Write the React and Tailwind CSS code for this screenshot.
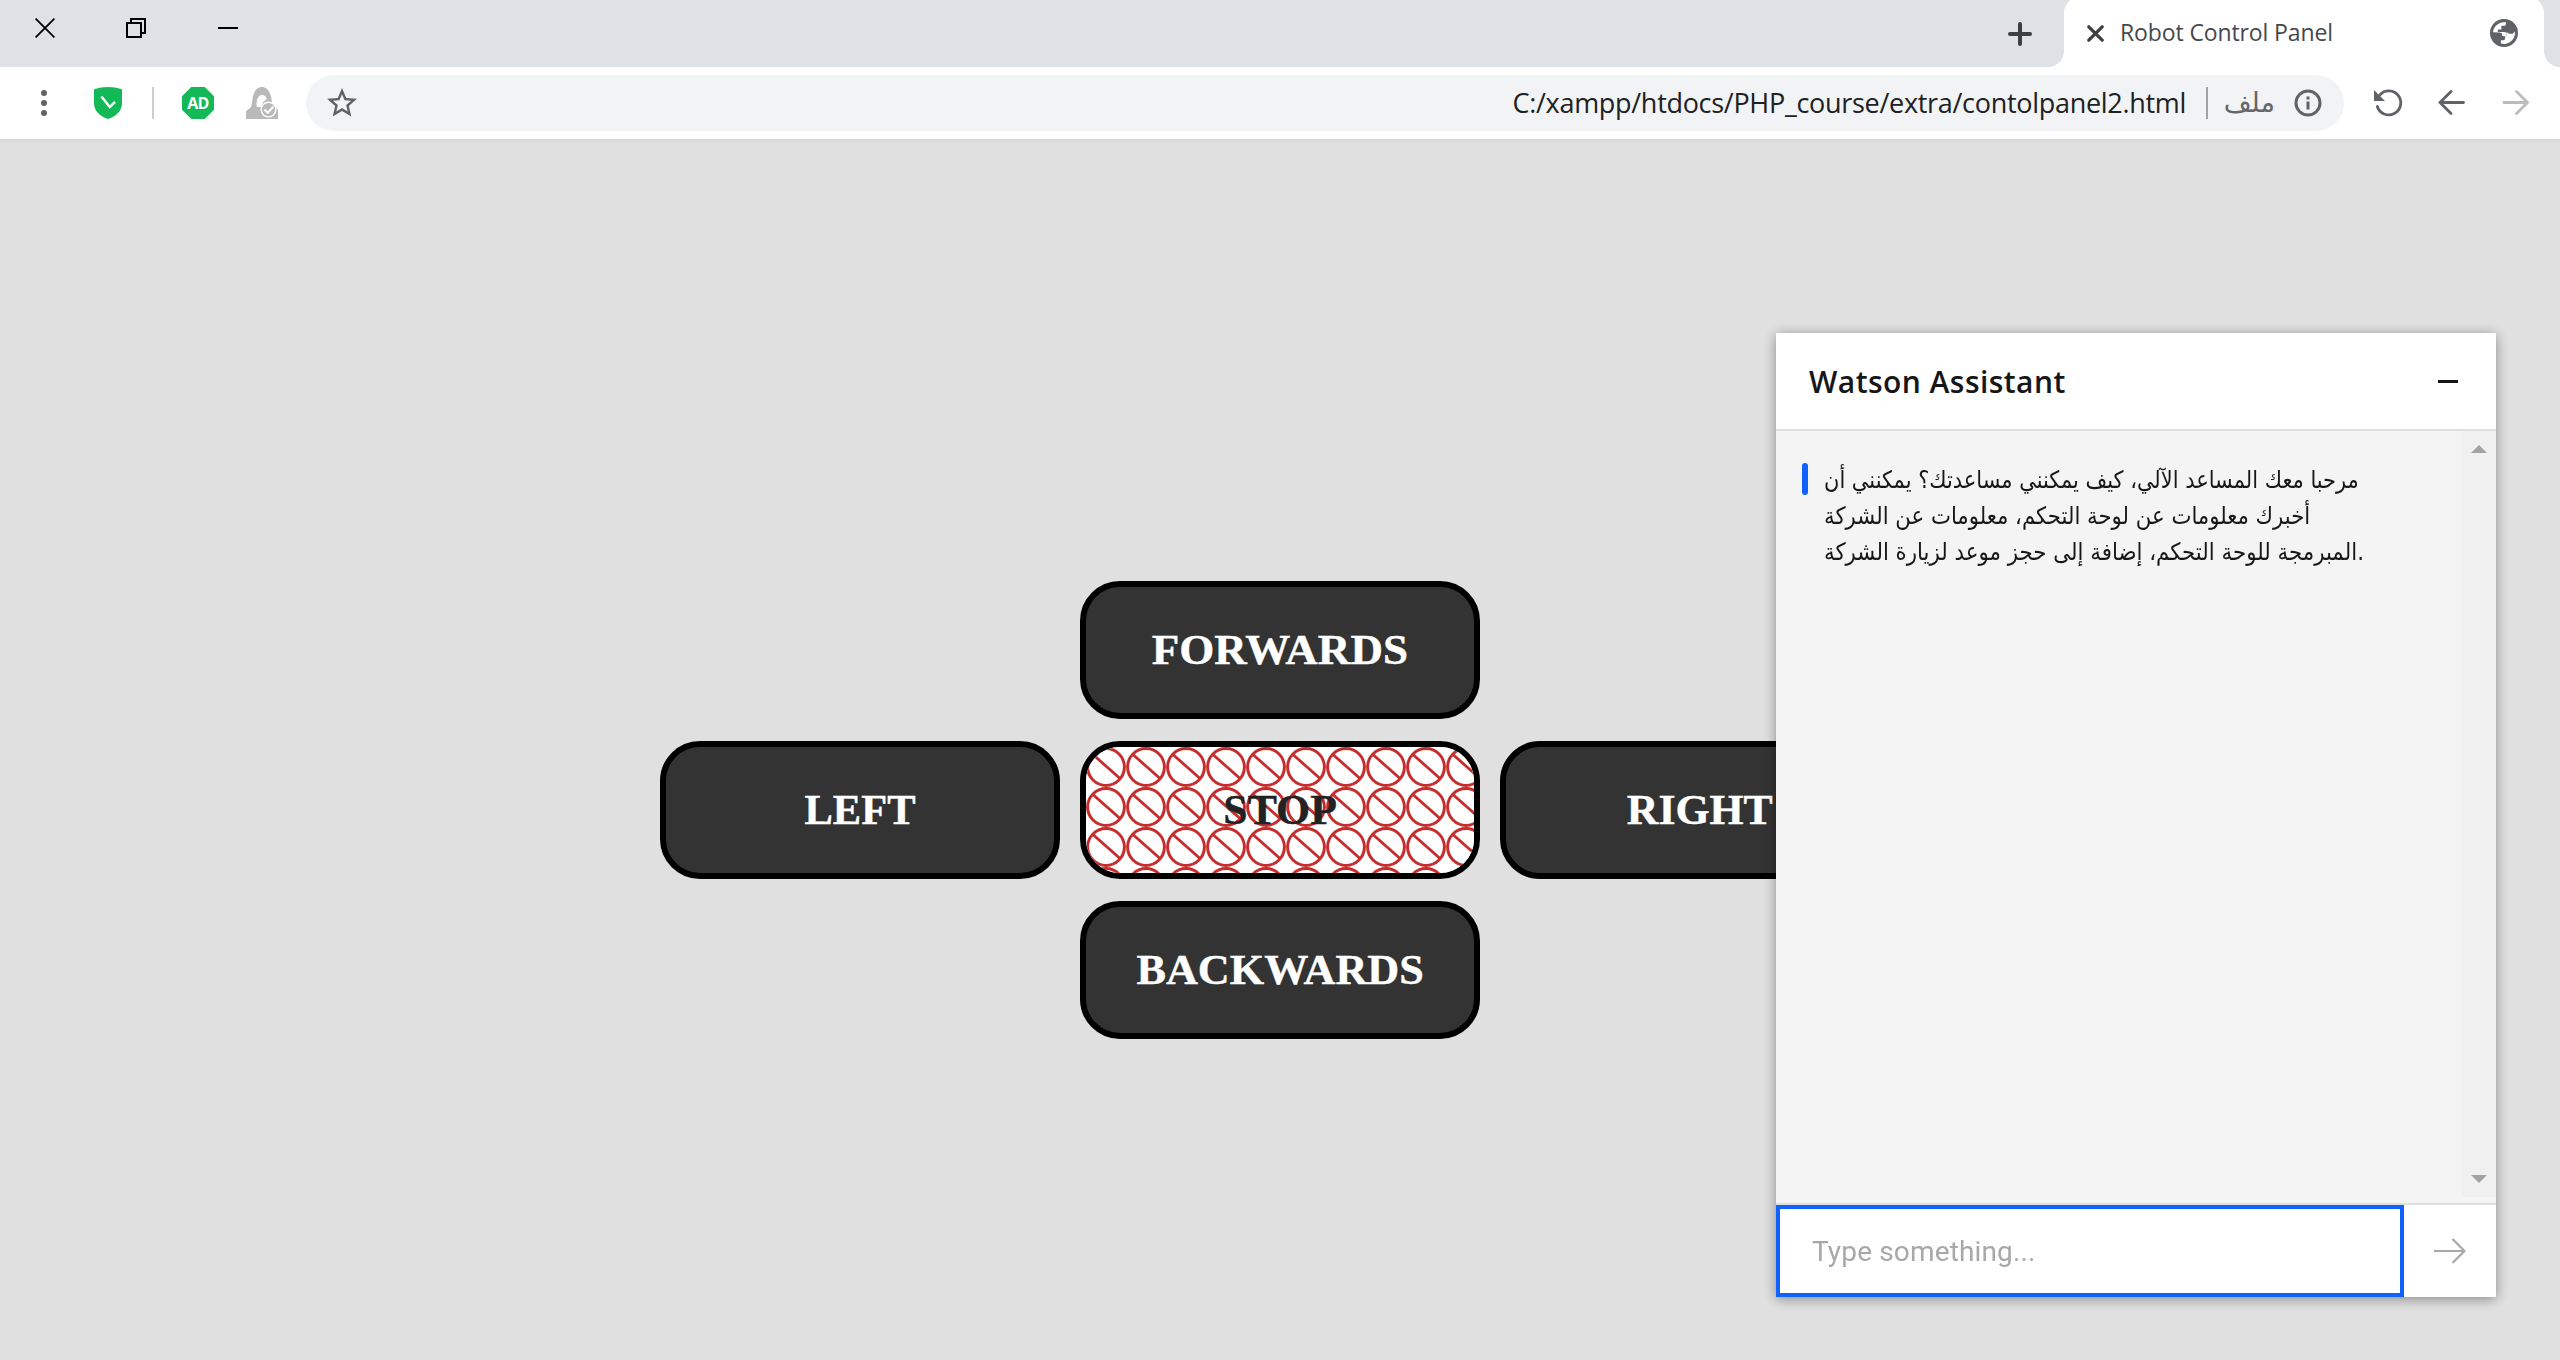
const TOOL_GREY = "#5f6368";

function WindowControls() {
  return (
    <div className="flex items-center gap-[72px] pl-[35px] pb-[11px]">
      <svg className="size-5" viewBox="0 0 20 20" stroke="#000" strokeWidth="1.8" fill="none">
        <path d="M.6.6 19.4 19.4M19.4.6.6 19.4" />
      </svg>
      <svg className="size-5 -ml-px" viewBox="0 0 20 20" stroke="#000" strokeWidth="2" fill="none">
        <path d="M1 5h14v14H1zM5 5V1h14v14h-4" />
      </svg>
      <svg className="size-5" viewBox="0 0 20 20">
        <path d="M0 9h20v2H0z" />
      </svg>
    </div>
  );
}

function TabStrip() {
  return (
    <div className="flex h-[67px] bg-white">
      <div className="flex flex-1 items-center justify-between rounded-br-[16px] bg-[#dee1e6] pr-[32px]">
        <WindowControls />
        <svg className="size-6" viewBox="0 0 24 24" stroke="#3c4043" strokeWidth="4" strokeLinecap="round">
          <path d="M12 2v20M2 12h20" />
        </svg>
      </div>
      <div className="w-[480px] bg-[#dee1e6]">
        <div className="-mt-[3px] flex h-[70px] items-center rounded-t-[16px] bg-white pr-[26px] pl-[23px] pt-[2px]">
          <svg className="size-[17px]" viewBox="0 0 17 17" stroke="#3c4043" strokeWidth="3.2" strokeLinecap="round">
            <path d="M1.8 1.8l13.4 13.4M15.2 1.8 1.8 15.2" />
          </svg>
          <span className="ml-[16px] flex-1 pb-[2px] font-['Open_Sans',sans-serif] text-[23px] leading-8 tracking-[-0.12px] whitespace-nowrap text-[#45494d]">
            Robot Control Panel
          </span>
          <svg className="size-7" viewBox="0 0 28 28">
            <circle cx="14" cy="14" r="14" fill={TOOL_GREY} />
            <path
              d="M3 13.2C3.4 8.6 7 4.6 11.6 3.4L15.8 3v2.2c0 1-.8 1.6-1.8 1.6h-2.6v2.6c0 .8-.5 1.2-1.2 1.2H7.8v2.4h6.6c1.2 0 2 .9 2 2v2.2h-2.8c-1 0-1.7-.7-1.7-1.7v-1.3L9.4 13.6z"
              fill="#fff"
            />
            <path
              d="M24.9 12.2c1 5.9-3.6 12.6-11.2 12.8l-2.8-.4v-3.4h2.3c1.1 0 1.9-.8 1.9-1.8v-2.2h1.4v-4.4c1 1.2 2.2 2 3.4 2h1.8c1.4 0 2.4-1.2 3.2-2.6z"
              fill="#fff"
            />
          </svg>
        </div>
      </div>
      <div className="w-4 rounded-bl-[16px] bg-[#dee1e6]" />
    </div>
  );
}

function Extensions() {
  return (
    <div className="flex items-center">
      <svg className="ml-[41px] h-8 w-1.5" viewBox="0 0 6 32" fill={TOOL_GREY}>
        <circle cx="3" cy="6" r="3" />
        <circle cx="3" cy="16" r="3" />
        <circle cx="3" cy="26" r="3" />
      </svg>
      <svg className="ml-[47px] h-8 w-7" viewBox="0 0 28 32">
        <path d="M0 2.2Q14-2.2 28 2.2V16c0 8-6 13.4-14 16C6 29.4 0 24 0 16z" fill="#12b956" />
        <path d="M7.4 9.4 15.8 20l5.2-5.2" fill="none" stroke="#fff" strokeWidth="2.4" />
      </svg>
      <div className="ml-[30px] h-8 w-0.5 bg-[#cdced0]" />
      <div className="ml-[28px] flex size-8 items-center justify-center bg-[#12b956] [clip-path:polygon(29%_0,71%_0,100%_29%,100%_71%,71%_100%,29%_100%,0_71%,0_29%)]">
        <span className="font-['Open_Sans',sans-serif] text-[16px] leading-none font-bold tracking-[-0.8px] text-white">
          AD
        </span>
      </div>
      <svg className="ml-[32px] size-8" viewBox="0 0 32 32">
        <path
          d="M0 32v-7c0-1.800 3.600-3 5-5 1-2 1-5 1.500-8C7.500 5 10.500 0 16 0s8.500 5 9.500 12c.4 3 .6 4 1.500 5l5 6v9z"
          fill="#b9b9b9"
        />
        <path d="M11 20c-1-3-.5-6 .5-8.500C12.500 9 14 8 16 8c2.500 0 4.300 1.500 4.800 4.200-3.300 1.200-5 4-5.300 7.800z" fill="#fff" />
        <circle cx="22.500" cy="22.500" r="8" fill="#fff" />
        <circle cx="22.500" cy="22.500" r="6.600" fill="#b9b9b9" />
        <path d="M18.500 22.500l3.200 3.200 5.600-6" fill="none" stroke="#fff" strokeWidth="2.200" />
      </svg>
    </div>
  );
}

function AddressBar() {
  return (
    <div className="ml-[28px] flex h-14 w-[2038px] items-center rounded-full bg-[#f1f3f4] pr-[22px] pl-[18px]">
      <svg className="size-[36px]" viewBox="0 0 24 24" fill={TOOL_GREY}>
        <path d="M22 9.240l-7.190-.620L12 2 9.190 8.630 2 9.240l5.460 4.730L5.820 21 12 17.270 18.180 21l-1.630-7.030zM12 15.400l-3.760 2.270 1-4.280-3.320-2.880 4.380-.380L12 6.100l1.710 4.040 4.380.380-3.320 2.880 1 4.280z" />
      </svg>
      <span className="mr-[20px] ml-auto font-['Open_Sans',sans-serif] text-[27px] leading-10 tracking-[-0.3px] whitespace-nowrap text-[#202124]">
        C:/xampp/htdocs/PHP_course/extra/contolpanel2.html
      </span>
      <div className="h-8 w-0.5 bg-[#9fa1a4]" />
      <span className="ml-[15px] w-[52px] font-['DejaVu_Sans',sans-serif] text-[27px] leading-10 text-[#63676b]" dir="rtl">
        ملف
      </span>
      <svg className="ml-[19px] size-7" viewBox="0 0 28 28">
        <circle cx="14" cy="14" r="12" fill="none" stroke={TOOL_GREY} strokeWidth="3" />
        <path d="M12.500 12.500h3v8h-3zM12.500 7.500h3v3h-3z" fill={TOOL_GREY} />
      </svg>
    </div>
  );
}

function Toolbar() {
  return (
    <div className="flex h-[74px] items-center border-b-2 border-[#d9dadf] bg-white">
      <Extensions />
      <AddressBar />
      <div className="ml-[28px] flex items-center gap-8">
        <svg className="size-8" viewBox="0 0 32 32">
          <path d="M5.300 19.500A12 12 0 1 0 8 7.700" fill="none" stroke={TOOL_GREY} strokeWidth="2.800" strokeLinecap="round" />
          <path d="M2 3v11h11z" fill={TOOL_GREY} />
        </svg>
        <svg className="size-8" viewBox="0 0 32 32" fill="none" stroke={TOOL_GREY} strokeWidth="2.800" strokeLinecap="round">
          <path d="M27.500 15.500H4M15 4.500l-11 11 11 11" />
        </svg>
        <svg className="size-8" viewBox="0 0 32 32" fill="none" stroke="#babcbe" strokeWidth="2.800" strokeLinecap="round">
          <path d="M4 15.500H27.500M16.500 4.500l11 11-11 11" />
        </svg>
      </div>
    </div>
  );
}

function ControlButton({ className = "", labelClass = "", children }) {
  return (
    <button
      className={`flex h-[138px] w-[400px] items-center justify-center overflow-hidden rounded-[40px] border-6 border-black bg-[#333] pt-px font-['Liberation_Serif',serif] text-[42.5px] leading-none font-bold text-white ${className}`}
    >
      <span className={`[-webkit-text-stroke:0.4px_#fff] ${labelClass}`}>{children}</span>
    </button>
  );
}

function ProhibitedPattern() {
  return (
    <svg className="col-start-1 row-start-1 h-[126px] w-[388px]">
      <defs>
        <pattern id="prohibited" width="40" height="40" patternUnits="userSpaceOnUse">
          <rect width="40" height="40" fill="#fff" />
          <g fill="none" stroke="#c62e2e" strokeWidth="3">
            <circle cx="20" cy="20" r="18.400" />
            <path d="M7.500 8 34 31.500" />
          </g>
        </pattern>
      </defs>
      <rect width="388" height="126" fill="url(#prohibited)" />
    </svg>
  );
}

function ControlPad() {
  return (
    <div className="grid grid-cols-[400px_400px_400px] content-start gap-x-[20px] gap-y-[22px]">
      <ControlButton className="col-start-2" labelClass="scale-x-[1.06]">FORWARDS</ControlButton>
      <ControlButton className="col-start-1">LEFT</ControlButton>
      <button className="col-start-2 grid h-[138px] w-[400px] place-items-center overflow-hidden rounded-[40px] border-6 border-black bg-white font-['Liberation_Serif',serif] text-[42.5px] leading-none font-bold text-[#222]">
        <ProhibitedPattern />
        <span className="z-10 col-start-1 row-start-1 scale-x-[1.03] pt-px [-webkit-text-stroke:0.4px_#222]">STOP</span>
      </button>
      <ControlButton labelClass="scale-x-[1.03]">RIGHT</ControlButton>
      <ControlButton className="col-start-2" labelClass="scale-x-[1.04]">BACKWARDS</ControlButton>
    </div>
  );
}

const messageLines = [
  { text: "مرحبا معك المساعد الآلي، كيف يمكنني مساعدتك؟ يمكنني أن", scale: "scale-x-[0.873]" },
  { text: "أخبرك معلومات عن لوحة التحكم، معلومات عن الشركة", scale: "scale-x-[0.885]" },
  { text: "المبرمجة للوحة التحكم، إضافة إلى حجز موعد لزيارة الشركة.", scale: "scale-x-[0.889]" },
];

function ChatPanel() {
  return (
    <section className="absolute top-[333px] left-[1776px] flex h-[964px] w-[720px] flex-col bg-[#f4f4f4] opacity-[0.997] shadow-[0_2px_12px_rgba(0,0,0,0.4)]">
      <header className="flex h-[98px] items-center justify-between border-b-2 border-[#dfdfdf] bg-white pr-[38px] pl-[33px]">
        <h1 className="pt-[2px] font-['Open_Sans',sans-serif] text-[30px] leading-10 font-semibold tracking-[0.45px] text-[#171717]">
          Watson Assistant
        </h1>
        <div className="h-[3px] w-5 bg-[#171717]" />
      </header>
      <div className="flex flex-1">
        <div className="flex flex-1 items-start pt-[32px] pl-[26px]">
          <div className="h-8 w-1.5 rounded-full bg-[#0f62fe]" />
          <div
            dir="ltr"
            className="-mt-px ml-[16px] font-['DejaVu_Sans',sans-serif] text-[24px] leading-[36px] whitespace-nowrap text-[#171717]"
          >
            {messageLines.map((line) => (
              <p key={line.text} className={`origin-left ${line.scale}`}>
                {line.text}
              </p>
            ))}
          </div>
        </div>
        <div className="mb-[6px] flex w-[34px] flex-col items-center justify-between bg-[#f0f0f0] py-[14px]">
          <svg className="h-2 w-4" viewBox="0 0 16 8" fill="#a3a3a3">
            <path d="M0 8 8 0l8 8z" />
          </svg>
          <svg className="h-2 w-4" viewBox="0 0 16 8" fill="#a3a3a3">
            <path d="M0 0h16L8 8z" />
          </svg>
        </div>
      </div>
      <footer className="flex h-[94px] border-t-2 border-[#dfdfdf] bg-white">
        <input
          placeholder="Type something..."
          className="h-[92px] w-[628px] border-4 border-[#0f62fe] bg-white pl-[32px] font-['Roboto',sans-serif] text-[28px] tracking-[0.15px] outline-none placeholder:text-[#a8a8a8]"
        />
        <div className="flex flex-1 items-center justify-center">
          <svg className="size-8" viewBox="0 0 32 32" fill="none" stroke="#a8a8a8" strokeWidth="2.200">
            <path d="M0 16h31M18.500 4l12 12-12 12" />
          </svg>
        </div>
      </footer>
    </section>
  );
}

export default function App() {
  return (
    <div className="relative flex h-[1360px] w-[2560px] flex-col overflow-hidden bg-[#e0e0e0]">
      <TabStrip />
      <Toolbar />
      <main className="flex flex-1 justify-center pt-[440px]">
        <ControlPad />
      </main>
      <ChatPanel />
    </div>
  );
}
